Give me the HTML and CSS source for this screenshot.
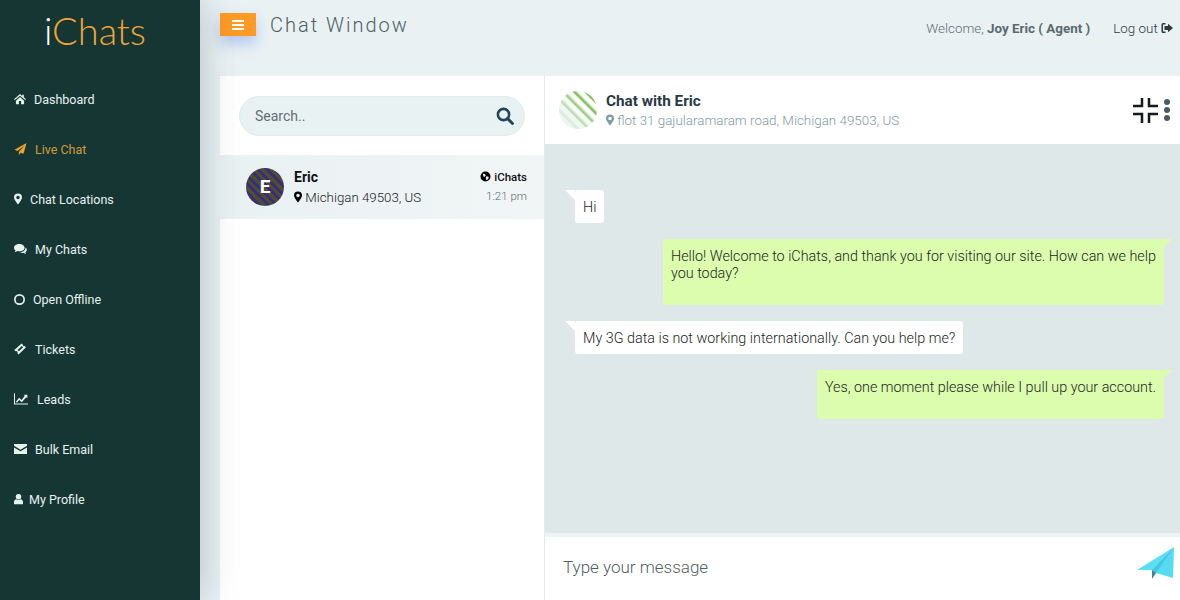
FILE: index.html
```html
<!DOCTYPE html>
<html lang="en">
<head>
  <meta charset="UTF-8">
  <title>iChats - Chat Window</title>
  <link rel="stylesheet" href="styles.css">
</head>
<body>
  <svg class="defs" width="0" height="0">
    <symbol id="i-marker" viewBox="4 1 16 22"><path fill-rule="evenodd" d="M12 1a8 8 0 0 0-8 8c0 4.600 8 14 8 14s8-9.400 8-14a8 8 0 0 0-8-8zm0 4.500a3.500 3.500 0 1 1 0 7 3.500 3.500 0 0 1 0-7z"/></symbol>
  </svg>
  <div class="container">
    <div class="sidebar">
      <div class="logo"><span class="logo-i">i</span>Chats</div>
      <a href="#" class="nav-link">
        <svg class="nav-icon ic-home" viewBox="1 3 22 19"><path d="M12 3.500 1 13l1.500 1.500L12 6.500l9.500 8L23 13l-4-3.500V4.500h-3v2.400zM4.500 15.500V22h5.500v-6h4v6h5.500v-6.500L12 9z"/></svg>
        Dashboard
      </a>
      <a href="#" class="nav-link active">
        <svg class="nav-icon ic-plane" viewBox="1 1 22 22"><path d="M23 1 1 13.500l5.500 2.300L19 5.500 9 17v6l3.600-4.300 5 2.100z"/></svg>
        Live Chat
      </a>
      <a href="#" class="nav-link">
        <svg class="nav-icon ic-marker"><use href="#i-marker"/></svg>
        Chat Locations
      </a>
      <a href="#" class="nav-link">
        <svg class="nav-icon ic-chats" viewBox="1 3 22 18"><path d="M10 3.500C4.800 3.500 1 6.300 1 10c0 1.900 1 3.500 2.700 4.700-.3 1-.9 1.900-1.700 2.800 1.700-.2 3.300-.9 4.700-2 1 .3 2.100.5 3.300.5 5.200 0 9-2.800 9-6s-3.800-6.500-9-6.500z"/><path d="M20.500 9.500c.2 4-3.800 7.800-9.500 8 1.700 1.300 4 1.700 6.300 1 1.200 1 2.600 1.600 4.200 1.800-.7-.8-1.200-1.600-1.500-2.600 3.500-2.200 3.500-6.200.5-8.200z"/></svg>
        My Chats
      </a>
      <a href="#" class="nav-link">
        <svg class="nav-icon ic-circle" viewBox="1.400 1.400 21.200 21.200"><circle cx="12" cy="12" r="9" fill="none" stroke="currentColor" stroke-width="3.200"/></svg>
        Open Offline
      </a>
      <a href="#" class="nav-link gap-wide">
        <svg class="nav-icon ic-ticket" viewBox="1 1 22 22"><path fill-rule="evenodd" d="M15 2 1.500 14l2.200 2.300a2.500 2.500 0 0 1 3.500 3.400L9.500 22 23 9l-2.200-2.300a2.500 2.500 0 0 1-3.500-2.400zm.3 4.500 2.400 2.500-7.700 7.300-2.500-2.500z"/></svg>
        Tickets
      </a>
      <a href="#" class="nav-link gap-wide">
        <svg class="nav-icon ic-leads" viewBox="1 3 22 18"><path d="M1 3h1.600v16H23v1.800H1z"/><path d="M4 16.500 9 10l4 3.500 5-6.500-1.800-1.500H22V11l-1.700-1.700L13.300 17 9.300 13.500 5.500 18z"/></svg>
        Leads
      </a>
      <a href="#" class="nav-link">
        <svg class="nav-icon ic-mail" viewBox="1 4 22 17"><path d="M1 4h22v3.200l-11 6.500L1 7.200z"/><path d="M1 9.800l11 6.500 11-6.500V21H1z"/></svg>
        Bulk Email
      </a>
      <a href="#" class="nav-link gap-small">
        <svg class="nav-icon ic-user" viewBox="3 1.500 18 20.500"><circle cx="12" cy="7" r="5.500"/><path d="M3 22v-4.500C3 14.500 5 12.500 7.500 12c1.200 1 2.800 1.600 4.500 1.600s3.300-.6 4.500-1.600c2.500.5 4.500 2.500 4.500 5.500V22z"/></svg>
        My Profile
      </a>
    </div>

    <div class="main">
      <div class="header">
        <button class="menu-btn">
          <svg viewBox="0 0 12 10" width="12" height="10"><path d="M0 0h12v2H0zM0 4h12v2H0zM0 8h12v2H0z"/></svg>
        </button>
        <h1 class="page-title">Chat Window</h1>
        <div class="welcome">Welcome, <strong>Joy Eric ( Agent )</strong></div>
        <a href="#" class="logout">Log out
          <svg viewBox="0 0 24 24" width="12" height="12"><path d="M9 2H4a3 3 0 0 0-3 3v14a3 3 0 0 0 3 3h5v-3H5a1 1 0 0 1-1-1V6a1 1 0 0 1 1-1h4z"/><path d="M14 3.500 24 12l-10 8.500V16H7V8h7z"/></svg>
        </a>
      </div>

      <div class="panels">
        <div class="chat-list">
          <div class="search-wrap">
            <div class="search-box">
              <input class="search-input" type="text" placeholder="Search..">
              <svg viewBox="0 0 24 24" width="18" height="18" class="search-icon"><circle cx="10" cy="10" r="7.500" fill="none" stroke="currentColor" stroke-width="3.400"/><path d="M15.500 15.500 22 22" stroke="currentColor" stroke-width="3.800" stroke-linecap="round"/></svg>
            </div>
          </div>
          <div class="chat-item">
            <div class="avatar">E</div>
            <div class="chat-info">
              <div class="chat-name">Eric</div>
              <div class="chat-place">
                <svg width="8" height="12"><use href="#i-marker"/></svg>
                Michigan 49503, US
              </div>
            </div>
            <div class="chat-meta">
              <div class="chat-source">
                <svg viewBox="0 0 24 24" width="11" height="11"><path fill-rule="evenodd" d="M12 1a11 11 0 1 0 0 22 11 11 0 0 0 0-22zM6 5.500l5 1.500 1.500 3-3 3-2-1zm8 6 5 1-1 5-4 2.500-1.500-5z"/></svg>
                iChats
              </div>
              <div class="chat-time">1:21 pm</div>
            </div>
          </div>
        </div>

        <div class="chat-window">
          <div class="chat-head">
            <div class="chat-logo"></div>
            <div class="chat-head-text">
              <div class="chat-title">Chat with Eric</div>
              <div class="chat-address">
                <svg width="8" height="12"><use href="#i-marker"/></svg>
                flot 31 gajularamaram road, Michigan 49503, US
              </div>
            </div>
            <svg class="compress" viewBox="0 0 25 25" width="25" height="25"><path d="M9 0v8H0M16 0v8H25M9 25v-9H0M16 25v-9H25" fill="none" stroke="#16191b" stroke-width="2.500"/></svg>
            <div class="dots"><span></span><span></span><span></span></div>
          </div>

          <div class="messages">
            <div class="msg in">Hi</div>
            <div class="msg out">Hello! Welcome to iChats, and thank you for visiting our site. How can we help you today?</div>
            <div class="msg in">My 3G data is not working internationally. Can you help me?</div>
            <div class="msg out">Yes, one moment please while I pull up your account.</div>
          </div>

          <div class="composer">
            <input class="composer-input" type="text" placeholder="Type your message">
            <svg class="send" viewBox="0 0 40 34" width="40" height="34">
              <path d="M38 0 1 23l15 0z" fill="#5cdff5"/>
              <path d="M38 0 37 31l-17-5-4-3z" fill="#55dcf3"/>
              <path d="M38 0 16 23l4 3z" fill="#46c6e0"/>
              <path d="M16 23v9l4-6z" fill="#3a8399"/>
            </svg>
          </div>
        </div>
      </div>
    </div>
  </div>
</body>
</html>
```
FILE: styles.css
```css
* {
  box-sizing: border-box;
}
body {
  margin: 0;
  font-family: Roboto, "Liberation Sans", sans-serif;
  font-size: 14px;
  color: #333;
  background: #e9f1f3;
}
.defs {
  display: block;
  height: 0;
}
.container {
  display: flex;
  height: 600px;
  overflow: hidden;
}

/* sidebar */
.sidebar {
  width: 200px;
  flex: none;
  background: #163634;
  box-shadow: 0 0 36px rgba(30, 60, 70, 0.28);
  position: relative;
  z-index: 2;
}
.logo {
  height: 74px;
  padding: 5px 0 0 44px;
  font-family: Lato, sans-serif;
  font-weight: 300;
  font-size: 38px;
  line-height: 50px;
  color: #f0a534;
}
.logo-i {
  color: #fff;
}
.nav-link {
  display: flex;
  align-items: center;
  height: 50px;
  padding-left: 14px;
  gap: 8px;
  font-size: 12.5px;
  color: #e6f2ef;
  text-decoration: none;
}
.nav-link.gap-wide {
  gap: 9px;
}
.nav-link.gap-small {
  gap: 6px;
}
.nav-link.active {
  color: #d29a3a;
}
.nav-link.active .nav-icon {
  fill: #f0a030;
}
.nav-icon {
  height: 12px;
  fill: currentColor;
  flex: none;
}
.ic-home, .ic-ticket {
  width: 12px;
}
.ic-plane, .ic-chats, .ic-mail {
  width: 13px;
}
.ic-marker {
  width: 8px;
}
.ic-circle {
  width: 11px;
  height: 11px;
}
.ic-leads {
  width: 14px;
}
.ic-user {
  width: 9px;
}

/* top bar */
.main {
  flex: 1;
  display: flex;
  flex-direction: column;
  min-width: 0;
}
.header {
  height: 76px;
  flex: none;
  display: flex;
  align-items: flex-start;
  padding: 13px 7px 0 20px;
}
.menu-btn {
  width: 36px;
  height: 23px;
  padding: 0;
  border: none;
  background: #ff9a24;
  box-shadow: 0 8px 14px rgba(90, 130, 230, 0.35);
  display: flex;
  align-items: center;
  justify-content: center;
}
.menu-btn svg {
  fill: #fff;
}
.page-title {
  margin: 0 0 0 14px;
  flex: 1;
  font-size: 20px;
  font-weight: 300;
  letter-spacing: 2px;
  line-height: 24px;
  color: #4d5f64;
}
.welcome {
  margin-top: 7px;
  font-size: 13.4px;
  font-weight: 300;
  line-height: 18px;
  color: #5f6f73;
}
.welcome strong {
  font-weight: 700;
  color: #5a6a6e;
}
.logout {
  margin: 7px 0 0 23px;
  font-size: 13.4px;
  line-height: 18px;
  font-weight: 300;
  color: #2c3a3e;
  text-decoration: none;
}
.logout svg {
  fill: #2c3a3e;
  vertical-align: -1px;
}

/* panels */
.panels {
  flex: 1;
  display: flex;
  padding-left: 20px;
  min-height: 0;
}
.chat-list {
  width: 325px;
  flex: none;
  background: #fff;
  border-right: 1px solid #e3ebec;
}
.search-wrap {
  height: 79px;
  padding: 20px 19px 0;
}
.search-box {
  height: 40px;
  display: flex;
  align-items: center;
  padding: 0 10px 0 15px;
  background: #e9f2f3;
  border: 1px solid #e1ecec;
  border-radius: 20px;
}
.search-input {
  flex: 1;
  min-width: 0;
  border: none;
  outline: none;
  background: transparent;
  padding: 0;
  font-family: inherit;
  font-size: 14px;
}
.search-input::placeholder {
  color: #5f7074;
  opacity: 1;
}
.search-icon {
  color: #23455a;
}
.chat-item {
  height: 64px;
  display: flex;
  align-items: center;
  padding: 0 17px 0 26px;
  background: linear-gradient(90deg, #e9f1f2, #f1f5f6);
}
.avatar {
  width: 38px;
  height: 38px;
  flex: none;
  border-radius: 50%;
  background: repeating-linear-gradient(45deg, #4c5028 0, #4c5028 3px, #3a2a82 3px, #3a2a82 6px);
  color: #fff;
  font-weight: 700;
  font-size: 19px;
  line-height: 38px;
  text-align: center;
}
.chat-info {
  flex: 1;
  margin-left: 10px;
}
.chat-name {
  font-weight: 700;
  line-height: 20px;
  color: #111;
}
.chat-place {
  margin-top: 1px;
  font-size: 13.3px;
  line-height: 20px;
  font-weight: 300;
  color: #222;
}
.chat-place svg {
  vertical-align: -1px;
}
.chat-meta {
  text-align: right;
}
.chat-source {
  font-size: 11.5px;
  font-weight: 500;
  line-height: 18px;
  color: #111;
}
.chat-source svg {
  vertical-align: -1px;
}
.chat-time {
  font-size: 11.5px;
  font-weight: 300;
  line-height: 20px;
  color: #5f6a6e;
}

/* chat window */
.chat-window {
  flex: 1;
  min-width: 0;
  display: flex;
  flex-direction: column;
}
.chat-head {
  height: 68px;
  flex: none;
  display: flex;
  align-items: center;
  padding: 0 10px 0 14px;
  background: #fff;
}
.chat-logo {
  width: 38px;
  height: 38px;
  flex: none;
  border-radius: 50%;
  background:
    linear-gradient(to bottom left, rgba(255, 255, 255, 0) 30%, rgba(235, 245, 240, 0.85) 75%),
    repeating-linear-gradient(45deg, #ffffff 0, #ffffff 3px, #6fb346 5px, #ffffff 8px);
}
.chat-head-text {
  flex: 1;
  margin-left: 9px;
  padding-top: 2px;
}
.chat-title {
  font-size: 15.3px;
  font-weight: 700;
  line-height: 20px;
  color: #2a3a44;
}
.chat-address {
  font-size: 13.4px;
  font-weight: 300;
  line-height: 20px;
  color: #7f9aa2;
}
.chat-address svg {
  fill: #7f9aa2;
  vertical-align: -1px;
}
.compress {
  flex: none;
}
.dots {
  display: flex;
  flex-direction: column;
  gap: 2px;
  margin-left: 6px;
}
.dots span {
  width: 6px;
  height: 6px;
  border-radius: 50%;
  background: #4d5a5f;
}
.messages {
  flex: 1;
  min-height: 0;
  display: flex;
  flex-direction: column;
  align-items: flex-start;
  gap: 16px;
  padding: 46px 16px 0 30px;
  background: #dee8e9;
}
.msg {
  position: relative;
  padding: 9px 8px 7px;
  font-size: 14.35px;
  line-height: 17px;
  font-weight: 300;
  color: #1a1f20;
  background: #fff;
  border-radius: 3px;
}
.msg.in::before {
  content: "";
  position: absolute;
  top: 0;
  left: -10px;
  border-top: 10px solid #fff;
  border-left: 10px solid transparent;
}
.msg.out {
  align-self: flex-end;
  max-width: 501px;
  padding-bottom: 23px;
  background: #dcfcae;
  border-radius: 2px;
}
.msg.out::after {
  content: "";
  position: absolute;
  top: 0;
  right: -8px;
  border-top: 8px solid #dcfcae;
  border-right: 8px solid transparent;
}
.composer {
  height: 67px;
  flex: none;
  display: flex;
  align-items: center;
  padding: 0 4px 4px 18px;
  background: #fff;
  border-top: 4px solid #eef3f4;
}
.composer-input {
  flex: 1;
  min-width: 0;
  border: none;
  outline: none;
  padding: 0;
  font-family: inherit;
  font-size: 17px;
  font-weight: 300;
}
.composer-input::placeholder {
  color: #4f5f63;
  opacity: 1;
}
.send {
  flex: none;
  margin-top: -6px;
}
```
